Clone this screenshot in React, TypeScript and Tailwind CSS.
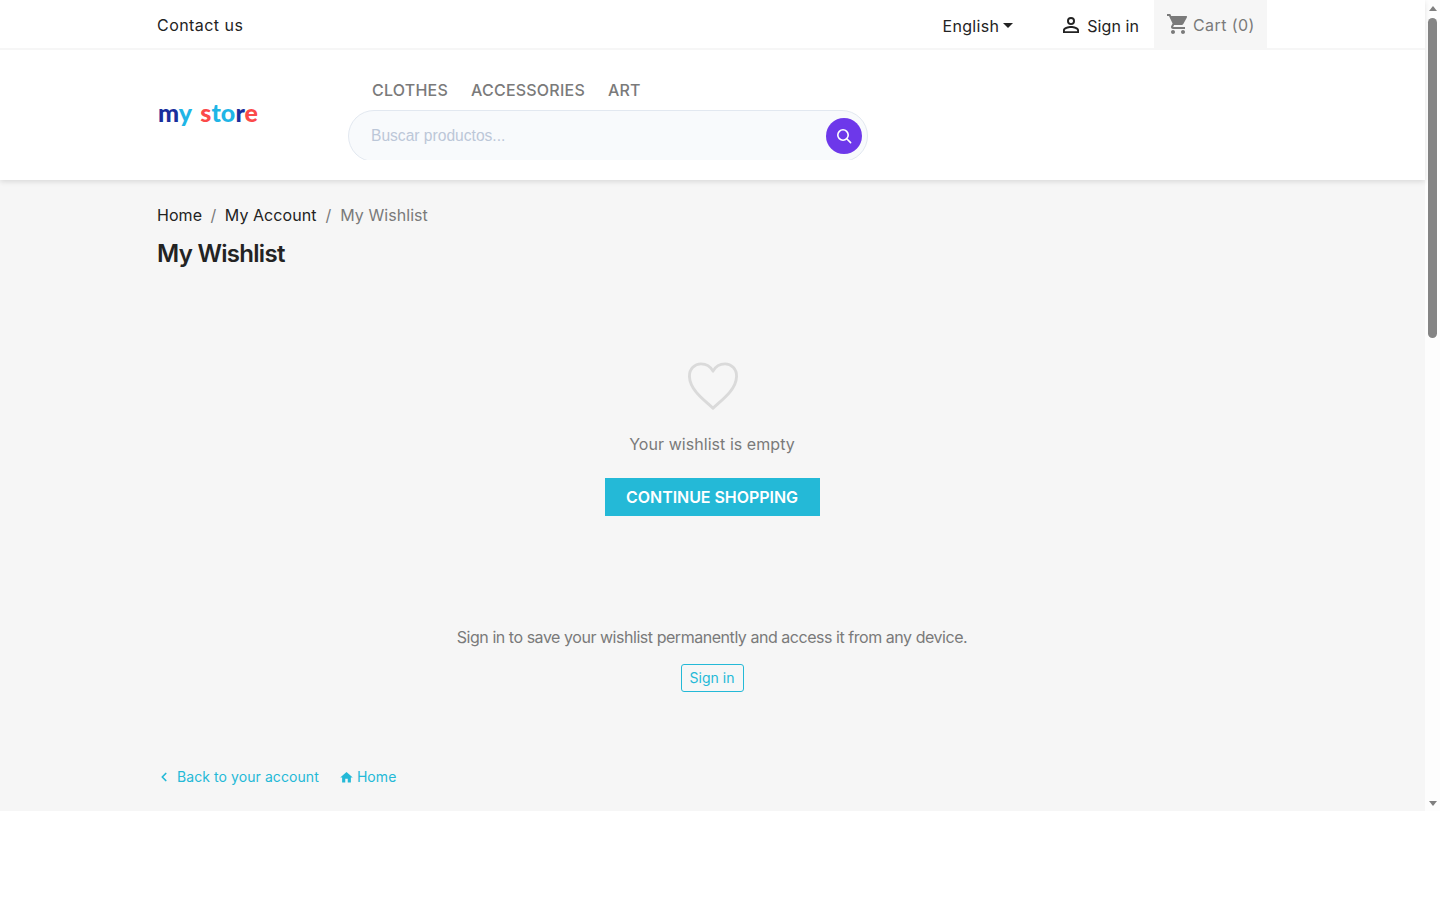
import { ChevronLeft } from "lucide-react";

const font = { fontFamily: "Inter, 'Open Sans', sans-serif" };

function Logo() {
  return (
    <div className="w-[191px] pl-[1px] pt-[47px] text-[25px] leading-[30px] font-black tracking-[0.1px] font-['Lato',sans-serif]">
      <span className="text-[#1a2f9c]">m</span>
      <span className="text-[#1fb5e6]">y</span>
      <span className="ml-[8px] text-[#fb4a4a]">s</span>
      <span className="text-[#1fb5e6]">to</span>
      <span className="text-[#1a2f9c]">r</span>
      <span className="text-[#fb4a4a]">e</span>
    </div>
  );
}

function UserIcon() {
  return (
    <svg width="24" height="24" viewBox="0 0 24 24" fill="#232323">
      <path d="M12 6a2.1 2.1 0 1 1 0 4.2A2.1 2.1 0 0 1 12 6m0 9c2.97 0 6.1 1.46 6.1 2.1v1.1H5.9v-1.1c0-.64 3.13-2.1 6.1-2.1M12 4.1a4 4 0 1 0 0 8 4 4 0 0 0 0-8zm0 9c-2.67 0-8 1.34-8 4v3h16v-3c0-2.66-5.33-4-8-4z" />
    </svg>
  );
}

function CartIcon() {
  return (
    <svg width="24" height="24" viewBox="0 0 24 24" fill="#7a7a7a">
      <path d="M7 18c-1.1 0-1.99.9-1.99 2S5.900 22 7 22s2-.9 2-2-.9-2-2-2zM1 2v2h2l3.600 7.590-1.350 2.450c-.16.280-.25.610-.25.960 0 1.100.9 2 2 2h12v-2H7.420c-.14 0-.25-.11-.25-.25l.03-.12.900-1.630h7.450c.750 0 1.410-.41 1.750-1.030l3.580-6.490A1 1 0 0 0 20 4H5.210l-.94-2H1zm16 16c-1.100 0-1.990.9-1.990 2s.89 2 1.990 2 2-.9 2-2-.9-2-2-2z" />
    </svg>
  );
}

function Scrollbar() {
  return (
    <div className="flex w-[15px] shrink-0 flex-col items-center bg-[#fdfdfd]">
      <div className="mt-[6px] h-0 w-0 border-x-[4.5px] border-b-[5px] border-x-transparent border-b-[#7f7f7f]" />
      <div className="mt-[7px] h-[320px] w-[9px] rounded-full bg-[#858585]" />
      <div className="mt-auto mb-[5px] h-0 w-0 border-x-[4.5px] border-t-[5px] border-x-transparent border-t-[#7f7f7f]" />
    </div>
  );
}

export default function App() {
  return (
    <div className="h-[900px] overflow-hidden bg-white" style={font}>
      <div className="flex h-[811px]">
        <div className="flex w-[1425px] flex-col bg-[#f6f6f6] text-[#232323]">
          <header className="relative h-[180px] bg-white shadow-[0_2px_5px_rgba(0,0,0,0.11)]">
            <div className="h-[50px] border-b-2 border-[#f6f6f6]">
              <div className="ml-[157px] mr-[158px] flex h-[48px] items-center">
                <a className="pt-[2px] text-[16px] tracking-[0.45px]">Contact us</a>
                <div className="ml-auto flex items-center pt-[4px] text-[16px] tracking-[0.3px]">
                  English
                  <span className="mb-[2px] ml-[4px] h-0 w-0 border-x-[5px] border-t-[5px] border-x-transparent border-t-[#232323]" />
                </div>
                <div className="ml-[46px] flex items-center gap-[2px] pt-[3px] text-[16px] tracking-[0.08px]">
                  <span className="mb-[2px] mr-[2px]"><UserIcon /></span>
                  Sign in
                </div>
                <div className="ml-[15px] flex h-[48px] w-[113px] items-center gap-[3px] bg-[#f6f6f6] pl-[12px] text-[16px] tracking-[0.4px] text-[#7a7a7a]">
                  <span className="mb-[1px]"><CartIcon /></span>
                  <span className="pt-[1px]">Cart (0)</span>
                </div>
              </div>
            </div>
            <div className="mx-[157px] flex">
              <Logo />
              <div className="flex flex-col">
                <nav className="flex h-[60px] gap-[23px] pl-[24px] pt-[28px] text-[16px] leading-[24px] font-medium tracking-[0.22px] text-[#7a7a7a]">
                  <span>CLOTHES</span>
                  <span>ACCESSORIES</span>
                  <span>ART</span>
                </nav>
                <div className="h-[50px] w-[520px] overflow-hidden">
                  <div className="flex h-[52px] items-start justify-between rounded-[26px] border border-[#e2e8f0] bg-[#f8fafc] pl-[22px] pr-[5px]">
                    <span className="pt-[15px] font-['Liberation_Sans',sans-serif] text-[15.6px] leading-[20px] text-[#bcc7d8]">
                      Buscar productos...
                    </span>
                    <span className="mt-[7px] flex h-[36px] w-[36px] items-center justify-center rounded-full bg-[#6d38ea]">
                      <svg width="18" height="18" viewBox="0 0 18 18" fill="none" stroke="white" strokeWidth="1.6" strokeLinecap="round">
                        <circle cx="8" cy="8" r="5.2" />
                        <path d="M12 12l3.600 3.600" />
                      </svg>
                    </span>
                  </div>
                </div>
              </div>
            </div>
          </header>

          <main className="mx-[157px] flex flex-1 flex-col">
            <div className="flex pt-[23px] text-[16px] leading-[24px] tracking-[0.05px]">
              <span>Home</span>
              <span className="mx-[8.5px] text-[#7a7a7a]">/</span>
              <span>My Account</span>
              <span className="mx-[9px] text-[#7a7a7a]">/</span>
              <span className="text-[#7a7a7a]">My Wishlist</span>
            </div>
            <h1 className="mt-[12px] text-[24px] leading-[30px] font-semibold tracking-[-0.7px]">My Wishlist</h1>

            <div className="mt-[93px] flex w-[1110px] flex-col items-center">
              <svg className="ml-[1px]" width="52" height="50" viewBox="0 0 54 52" fill="none" stroke="#dadada" strokeWidth="3" strokeLinejoin="round">
                <path d="M27 48 C20 41 3 30 2.500 15 C2.300 7 8 2 14.500 2 C20 2 24.500 5 27 9.500 C29.500 5 34 2 39.500 2 C46 2 51.700 7 51.500 15 C51 30 34 41 27 48 Z" />
              </svg>
              <p className="mt-[20px] text-[16px] leading-[24px] tracking-[0.05px] text-[#7a7a7a]">Your wishlist is empty</p>
              <button className="mt-[22px] flex h-[38px] w-[215px] items-center justify-center bg-[#24b9d7] text-[16px] font-semibold tracking-[-0.05px] text-white">
                CONTINUE SHOPPING
              </button>
              <p className="mt-[109px] text-[16px] leading-[24px] tracking-[-0.46px] text-[#7a7a7a]">
                Sign in to save your wishlist permanently and access it from any device.
              </p>
              <button className="mt-[15px] flex h-[28px] w-[63px] items-center justify-center rounded-[3px] border border-[#24b9d7] pb-[1px] text-[14px] text-[#24b9d7]">
                Sign in
              </button>
            </div>

            <div className="mt-[73px] flex items-center text-[14px] leading-[24px] tracking-[0.08px] text-[#24b9d7]">
              <ChevronLeft className="h-[14px] w-[14px]" strokeWidth={3} />
              <span className="ml-[6px]">Back to your account</span>
              <svg className="ml-[20px]" width="15" height="15" viewBox="0 0 24 24" fill="#24b9d7">
                <path d="M10 20v-6h4v6h5v-8h3L12 3 2 12h3v8z" />
              </svg>
              <span className="ml-[3px]">Home</span>
            </div>
          </main>
        </div>
        <Scrollbar />
      </div>
    </div>
  );
}
